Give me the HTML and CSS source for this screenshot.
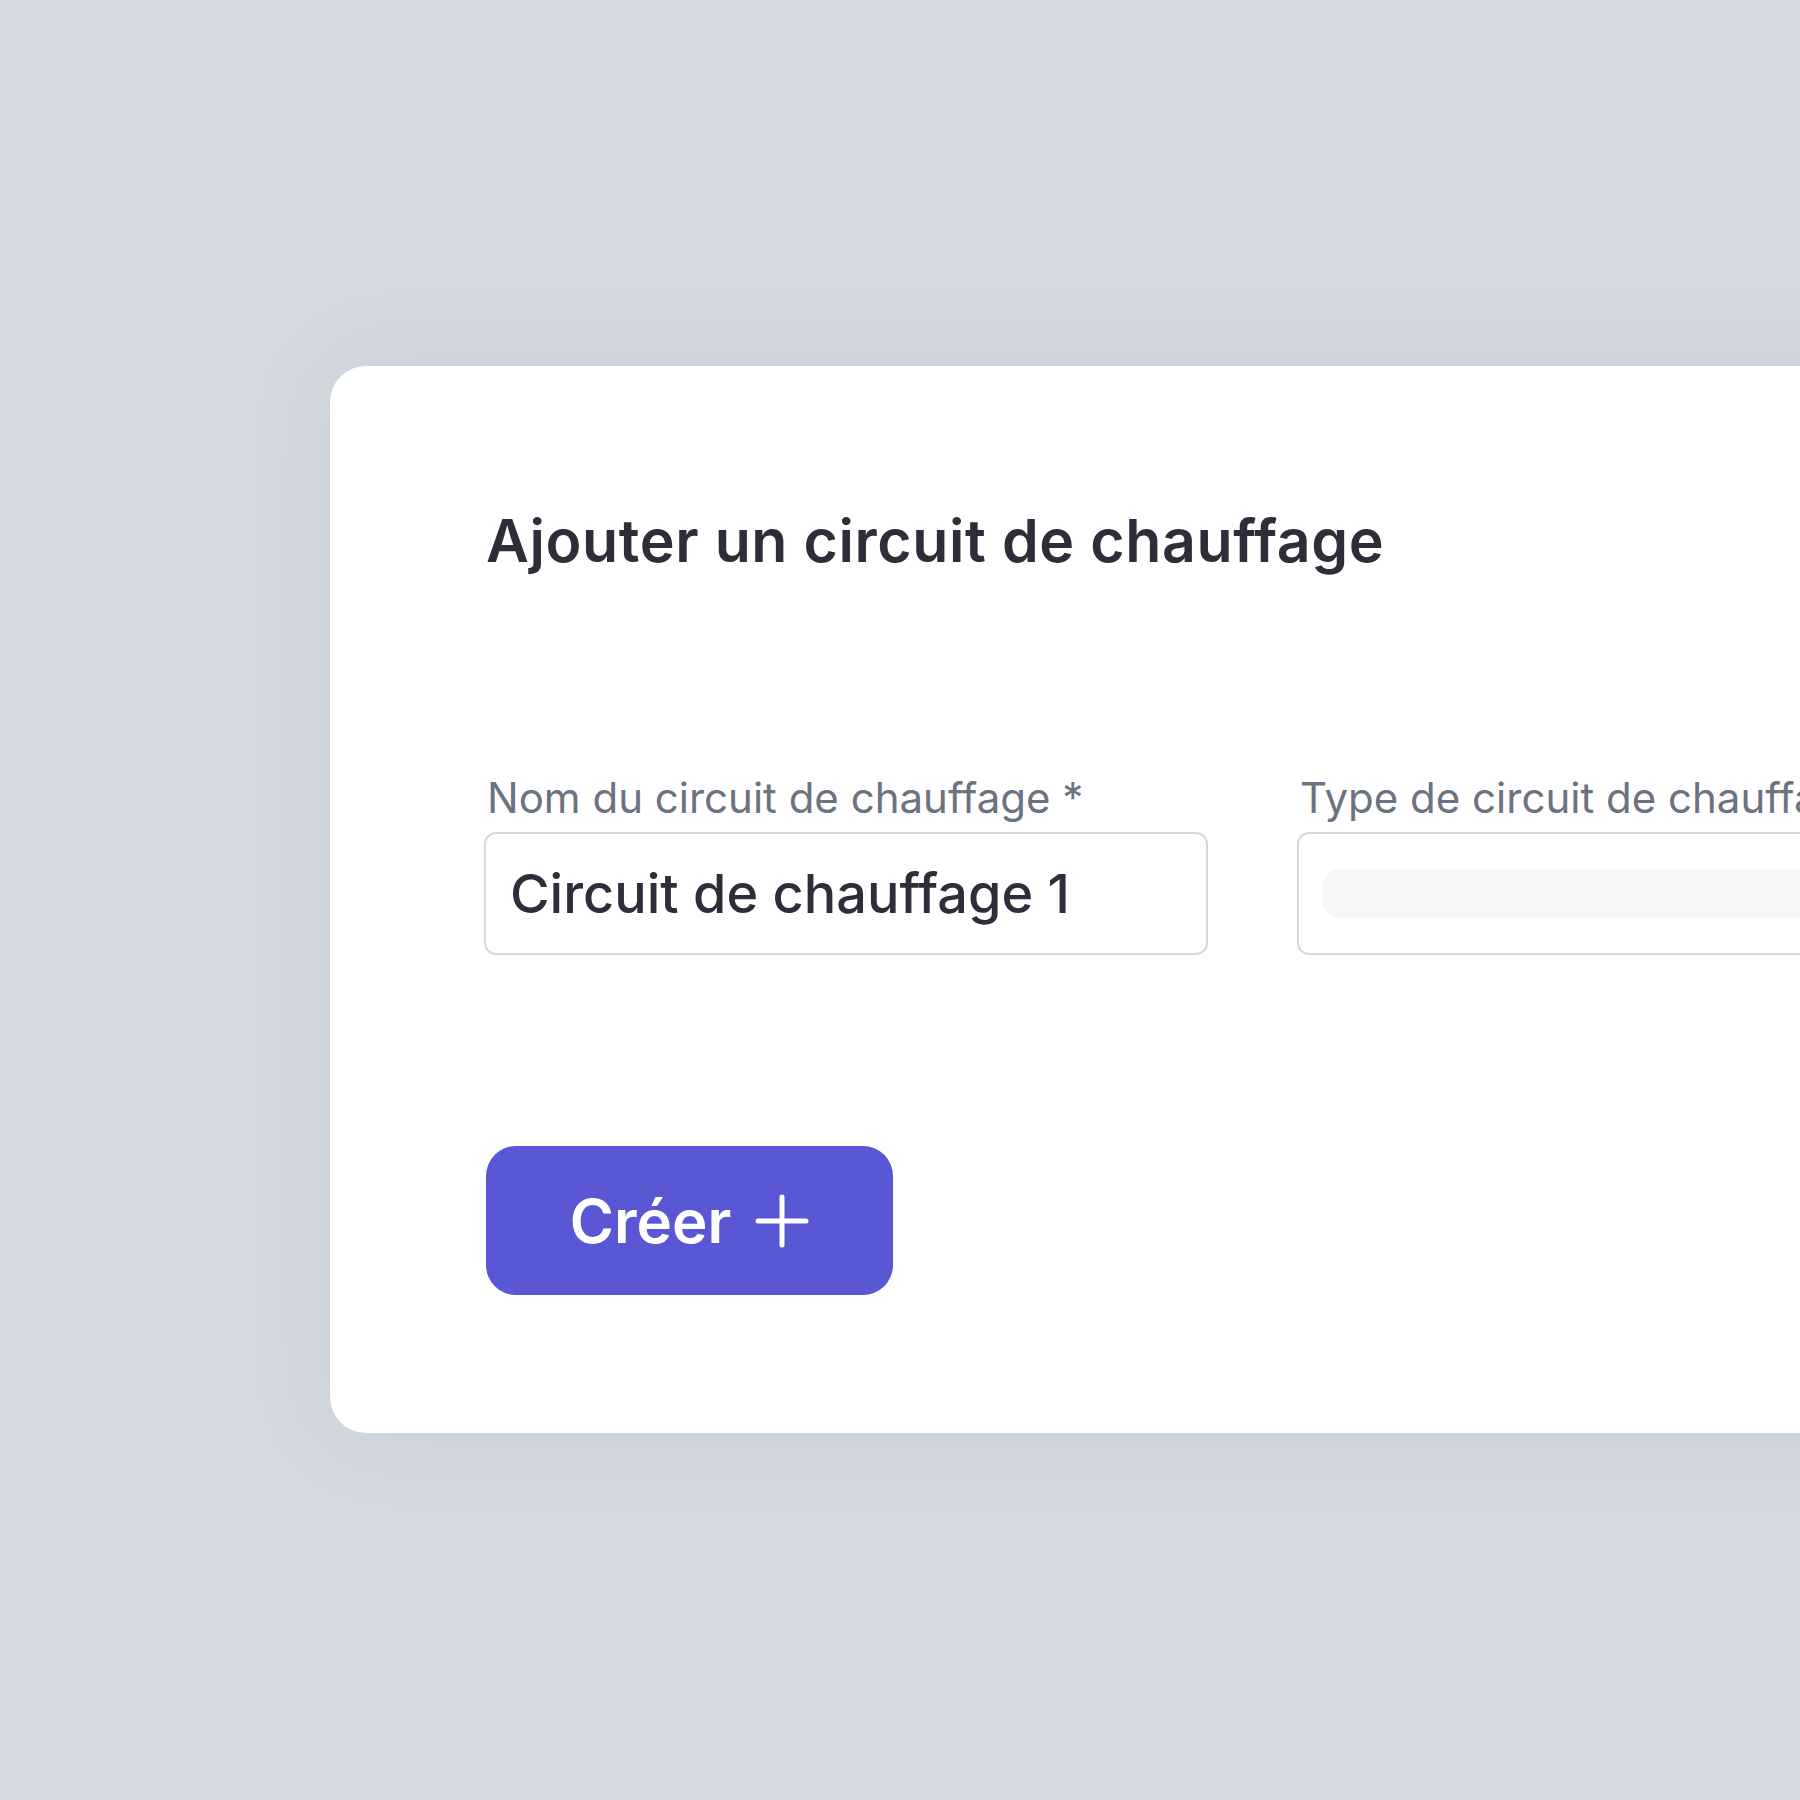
FILE: index.html
```html
<!doctype html>
<html lang="fr">
<head>
<meta charset="utf-8">
<title>Ajouter un circuit de chauffage</title>
<meta name="viewport" content="width=device-width,initial-scale=1">
<link rel="stylesheet" href="styles.css">
</head>
<body>
<div class="card">
  <h1>Ajouter un circuit de chauffage</h1>

  <div class="fields">
    <div class="field">
      <label for="name">Nom du circuit de chauffage *</label>
      <div class="input"><input id="name" value="Circuit de chauffage 1"></div>
    </div>
    <div class="field">
      <label>Type de circuit de chauffage *</label>
      <div class="input"><div class="skeleton"></div></div>
    </div>
  </div>

  <button class="create">Créer
    <svg viewBox="0 0 54 54" width="54" height="54" aria-hidden="true">
      <path d="M27 3v48M3 27h48" stroke="#fff" stroke-width="5" stroke-linecap="round" fill="none"/>
    </svg>
  </button>
</div>
</body>
</html>
```

FILE: styles.css
```css
:root{
  --bg:#d6dbe2;--card:#fff;--text:#2d2e3a;--sub:#6b7280;--line:#d6d8dc;--primary:#5a57d4;--skel:#f5f6f7
}
*{box-sizing:border-box;margin:0;padding:0;font-family:Inter,"Noto Sans",Arial,sans-serif;font-variant-ligatures:none}
html,body{height:100%}
body{background:var(--bg);color:var(--text);overflow:hidden;padding:366px 0 0 330px}
.card{background:var(--card);width:1845px;border-radius:36px;box-shadow:0 0 90px 20px rgb(70 80 95/.07);padding:140px 154px 138px;display:flex;flex-direction:column;align-items:flex-start}
h1{font-size:59px;font-weight:600;line-height:1.2;letter-spacing:.6px;padding-left:2px}
.fields{display:grid;grid-template-columns:724px 724px;gap:89px;margin-top:196px;width:100%}
.field{display:flex;flex-direction:column;gap:9px}
label{color:var(--sub);font-size:42px;line-height:1.2;padding-left:3px;white-space:nowrap}
.input{height:123px;border:2px solid var(--line);border-radius:12px;display:flex;align-items:center;padding:0 24px}
.input input{border:none;outline:none;background:none;width:100%;font-size:54px;font-weight:500;color:var(--text)}
.skeleton{height:49px;width:100%;background:var(--skel);border-radius:16px}
.create{margin:191px 0 0 2px;width:407px;height:149px;border:none;border-radius:30px;background:var(--primary);color:#fff;font-size:60px;font-weight:600;display:flex;align-items:center;justify-content:center;gap:24px;cursor:pointer}
.create svg{display:block}
```
